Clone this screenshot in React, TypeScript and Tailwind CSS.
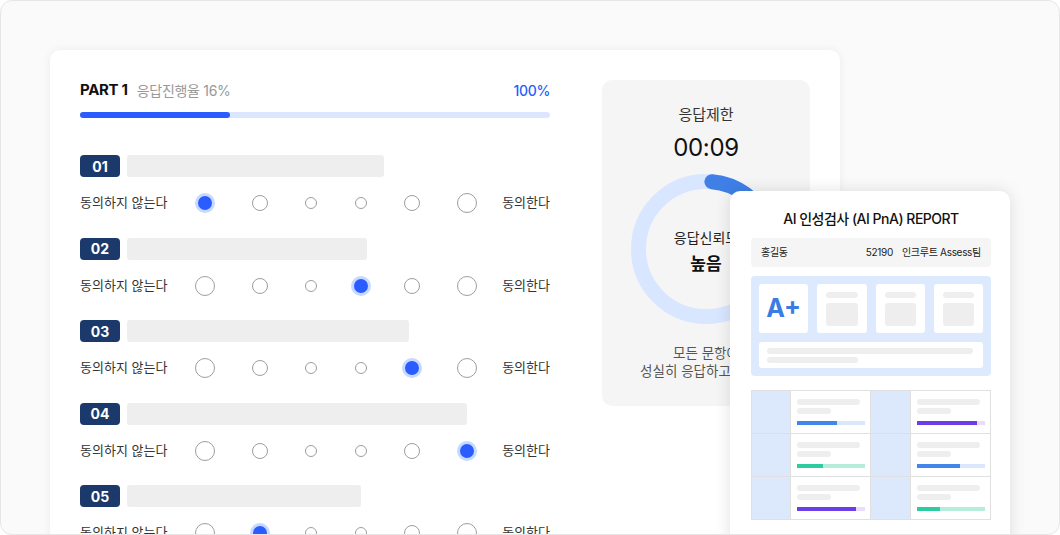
import React from 'react';

const font = { fontFamily: 'Inter, "Noto Sans CJK KR", "Noto Sans", sans-serif' };

const slots = [
  { size: 'w-[20px] h-[20px]', ml: '' },
  { size: 'w-[16px] h-[16px]', ml: 'ml-[35px]' },
  { size: 'w-[12px] h-[12px]', ml: 'ml-[31px]' },
  { size: 'w-[12px] h-[12px]', ml: 'ml-[30px]' },
  { size: 'w-[16px] h-[16px]', ml: 'ml-[31px]' },
  { size: 'w-[20px] h-[20px]', ml: 'ml-[35px]' },
];

const questions = [
  { n: '01', w: 'w-[257px]', sel: 0 },
  { n: '02', w: 'w-[240px]', sel: 3 },
  { n: '03', w: 'w-[282px]', sel: 4 },
  { n: '04', w: 'w-[340px]', sel: 5 },
  { n: '05', w: 'w-[234px]', sel: 1 },
];

const barColors: Record<string, { fill: string; track: string }> = {
  blue: { fill: 'bg-[#4285eb]', track: 'bg-[#dbe7fd]' },
  purple: { fill: 'bg-[#6c3ee8]', track: 'bg-[#e9dcfd]' },
  teal: { fill: 'bg-[#2dcca0]', track: 'bg-[#b6ecdb]' },
};

const tableRows = [
  [{ c: 'blue', pct: 59 }, { c: 'purple', pct: 88 }],
  [{ c: 'teal', pct: 38 }, { c: 'blue', pct: 63 }],
  [{ c: 'purple', pct: 87 }, { c: 'teal', pct: 34 }],
];

function Question({ n, w, sel }: { n: string; w: string; sel: number }) {
  return (
    <div>
      <div className="flex gap-[7px]">
        <div className="flex h-[22px] w-[40px] items-center justify-center rounded-[4px] bg-[#1b3a6b] text-[14px] font-bold text-white">
          {n}
        </div>
        <div className={`h-[22px] rounded-[3px] bg-[#eeeeee] ${w}`} />
      </div>
      <div className="mt-4 flex h-5 items-center text-[13px] text-[#333]">
        <span className="w-[115px]">동의하지 않는다</span>
        <div className="flex items-center">
          {slots.map((s, i) => (
            <div key={i} className={`flex w-[20px] justify-center ${s.ml}`}>
              {i === sel ? (
                <div className="h-[20px] w-[20px] rounded-full border-[3px] border-[#c6d9ff] bg-[#2b5cff]" />
              ) : (
                <div className={`rounded-full border border-[#9e9e9e] bg-white ${s.size}`} />
              )}
            </div>
          ))}
        </div>
        <span className="flex-1 text-right">동의한다</span>
      </div>
    </div>
  );
}

function TimerPanel() {
  const c = 2 * Math.PI * 67.5;
  return (
    <div className="flex h-[326px] w-[208px] flex-col items-center rounded-[10px] bg-[#f5f5f5] pt-[25px]">
      <div className="text-[15px] leading-5 text-[#333]">응답제한</div>
      <div className="mt-[7px] text-[24px] leading-8 font-normal tracking-[-0.3px] text-[#111]">00:09</div>
      <div className="relative mt-[10px] h-[150px] w-[150px]">
        <svg width="150" height="150" viewBox="0 0 150 150">
          <circle cx="75" cy="75" r="67.5" fill="none" stroke="#d9e6ff" strokeWidth="15" />
          <circle
            cx="75"
            cy="75"
            r="67.5"
            fill="none"
            stroke="#3f7fe6"
            strokeWidth="15"
            strokeLinecap="round"
            strokeDasharray={`${c * 0.17} ${c}`}
            transform="rotate(-85 75 75)"
          />
        </svg>
        <div className="absolute inset-0 flex flex-col items-center justify-center pt-[6px]">
          <div className="text-[14px] leading-5 text-[#222]">응답신뢰도</div>
          <div className="mt-[4px] text-[17px] leading-6 font-bold text-[#111]">높음</div>
        </div>
      </div>
      <div className="mt-5 text-center text-[13.5px] leading-[18px] text-[#555]">
        모든 문항에
        <br />
        성실히 응답하고 있어요
      </div>
    </div>
  );
}

function ReportCard() {
  return (
    <div className="absolute left-[729px] top-[190px] h-[360px] w-[280px] rounded-[10px] bg-white pl-[21px] pr-[19px] pt-[18px] shadow-[0_0_16px_rgba(0,0,0,0.12)]">
      <div className="text-center text-[14px] leading-5 font-medium tracking-[-0.5px] text-[#111]">
        AI 인성검사 (AI PnA) REPORT
      </div>
      <div className="mt-[9px] flex h-[29px] items-center justify-between rounded-[4px] bg-[#f5f5f5] px-[10px] text-[10px] tracking-[-0.3px] text-[#222]">
        <span>홍길동</span>
        <span>
          52190<span className="ml-[9px]">인크루트 Assess팀</span>
        </span>
      </div>
      <div className="mt-[9px] rounded-[4px] bg-[#dde9fd] p-[8px]">
        <div className="grid grid-cols-4 gap-[9px]">
          <div className="flex h-[49px] items-center justify-center rounded-[3px] bg-white text-[25px] font-bold text-[#3b7be6]">
            A+
          </div>
          {[0, 1, 2].map((i) => (
            <div key={i} className="h-[49px] rounded-[3px] bg-white px-[9px] pt-[8px]">
              <div className="h-[6px] rounded-[3px] bg-[#eeeeee]" />
              <div className="mt-[5px] h-[23px] rounded-[3px] bg-[#eeeeee]" />
            </div>
          ))}
        </div>
        <div className="mt-[9px] h-[26px] rounded-[3px] bg-white px-[8px] pt-[6px]">
          <div className="h-[6px] w-[206px] rounded-[3px] bg-[#eeeeee]" />
          <div className="mt-[3px] h-[6px] w-[91px] rounded-[3px] bg-[#eeeeee]" />
        </div>
      </div>
      <div className="mt-[14px] grid grid-cols-[38px_79px_39px_79px] gap-px bg-[#e0e0e0] p-px">
        {tableRows.map((row, r) =>
          row.map((cell, k) => {
            const col = barColors[cell.c];
            return (
              <React.Fragment key={`${r}-${k}`}>
                <div className="h-[42px] bg-[#dce9fd]" />
                <div className="h-[42px] bg-white px-[6px] pt-[8px]">
                  <div className="h-[6px] w-[63px] rounded-[3px] bg-[#eeeeee]" />
                  <div className="mt-[3px] h-[6px] w-[34px] rounded-[3px] bg-[#eeeeee]" />
                  <div className={`mt-[7px] flex h-[4px] w-[68px] ${col.track}`}>
                    <div className={`h-full ${col.fill}`} style={{ width: `${cell.pct}%` }} />
                  </div>
                </div>
              </React.Fragment>
            );
          })
        )}
      </div>
    </div>
  );
}

export default function App() {
  return (
    <div style={font} className="h-[535px] w-[1060px]">
      <div className="relative h-[535px] w-[1060px] overflow-hidden rounded-[12px] border border-[#e6e6e6] bg-[#fafafa] pl-[49px] pt-[49px]">
        <div className="flex h-[520px] w-[790px] gap-[52px] rounded-[10px] bg-white pl-[30px] pt-[30px] shadow-[0_0_10px_rgba(0,0,0,0.06)]">
          <div className="w-[470px]">
            <div className="flex h-5 items-center justify-between">
              <div className="flex items-center">
                <span className="text-[15px] font-bold tracking-[-0.3px] text-[#111]">PART 1</span>
                <span className="ml-[9px] text-[14px] tracking-[-0.3px] text-[#999]">응답진행율 16%</span>
              </div>
              <span className="text-[14px] font-medium tracking-[-0.3px] text-[#2b5cff]">100%</span>
            </div>
            <div className="mt-[12px] h-[6px] rounded-full bg-[#dce7ff]">
              <div className="h-full w-[150px] rounded-full bg-[#2b5cff]" />
            </div>
            <div className="mt-[37px] flex flex-col gap-[24.5px]">
              {questions.map((q) => (
                <Question key={q.n} {...q} />
              ))}
            </div>
          </div>
          <TimerPanel />
        </div>
        <ReportCard />
      </div>
    </div>
  );
}
